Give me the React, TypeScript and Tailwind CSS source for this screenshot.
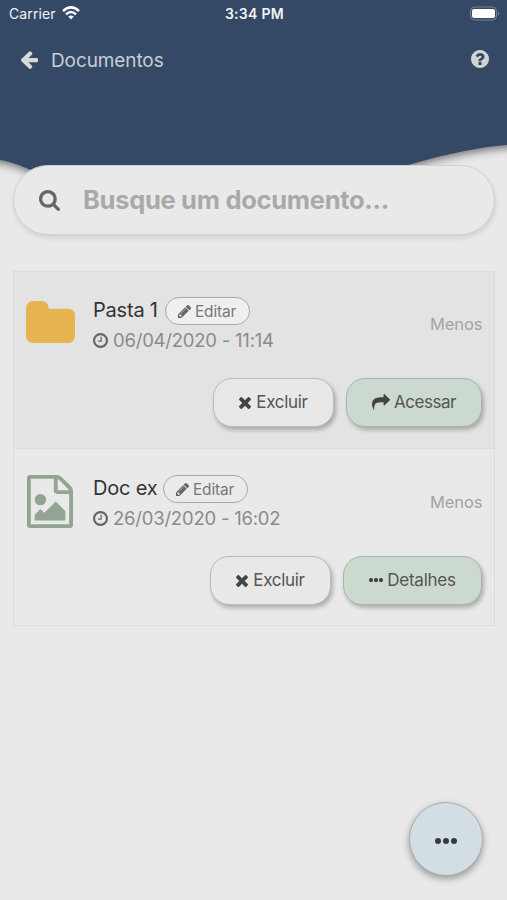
import type { ReactNode } from "react";

type GlyphProps = { box: string; d: string; className: string };

function Glyph({ box, d, className }: GlyphProps) {
  return (
    <svg viewBox={box} preserveAspectRatio="none" fill="currentColor" className={`block shrink-0 ${className}`} aria-hidden="true">
      <path d={d} />
    </svg>
  );
}

const glyphs = {
  arrow: {
    box: "192 154 1472 1586",
    d: "M1664 896v128q0 53-32.5 90.5T1547 1152H843l293 294q38 36 38 90t-38 90l-75 76q-37 37-90 37-52 0-91-37l-651-652q-37-37-37-90 0-52 37-91l651-650q38-38 91-38 52 0 90 38l75 74q38 38 38 91t-38 91L843 768h704q52 0 84.500 37.500T1664 896z",
  },
  question: {
    box: "128 128 1536 1536",
    d: "M1024 1376v-192q0-14-9-23t-23-9H800q-14 0-23 9t-9 23v192q0 14 9 23t23 9h192q14 0 23-9t9-23zm256-672q0-88-55.500-163t-138.500-116-170-41q-243 0-371 213-15 24 8 42l132 100q7 6 19 6 16 0 25-12 53-68 86-92 34-24 86-24 48 0 85.500 26t37.500 59q0 38-20 61t-68 45q-63 28-115.500 86.500T768 1020v36q0 14 9 23t23 9h192q14 0 23-9t9-23q0-19 21.500-49.500T1100 957q32-18 49-28.500t46-35 44.500-48 28-60.500 12.500-81zm384 192q0 209-103 385.500T1281.500 1561 896 1664t-385.500-103T231 1281.500 128 896t103-385.500T510.500 231 896 128t385.500 103T1561 510.500 1664 896z",
  },
  search: {
    box: "64 128 1664 1664",
    d: "M1216 832q0-185-131.500-316.500T768 384 451.500 515.500 320 832t131.500 316.500T768 1280t316.500-131.500T1216 832zm512 832q0 52-38 90t-90 38q-54 0-90-38l-343-342q-179 124-399 124-143 0-273.500-55.500t-225-150-150-225T64 832t55.500-273.500 150-225 225-150T768 128t273.500 55.500 225 150 150 225T1472 832q0 220-124 399l343 343q37 37 37 90z",
  },
  folder: {
    box: "64 128 1664 1408",
    d: "M1728 608v704q0 92-66 158t-158 66H288q-92 0-158-66t-66-158V352q0-92 66-158t158-66h320q92 0 158 66t66 158v32h672q92 0 158 66t66 158z",
  },
  image: {
    box: "128 0 1536 1792",
    d: "M1596 380q28 28 48 76t20 88v1152q0 40-28 68t-68 28H224q-40 0-68-28t-28-68V96q0-40 28-68t68-28h896q40 0 88 20t76 48zm-444-244v376h376q-10-29-22-41l-313-313q-12-12-41-22zm384 1528V640h-416q-40 0-68-28t-28-68V128H256v1536h1280zm-128-448v320H384v-192l192-192 128 128 384-384zm-832-192q-80 0-136-56t-56-136 56-136 136-56 136 56 56 136-56 136-136 56z",
  },
  clock: {
    box: "128 128 1536 1536",
    d: "M1024 544v448q0 14-9 23t-23 9H672q-14 0-23-9t-9-23v-64q0-14 9-23t23-9h224V544q0-14 9-23t23-9h64q14 0 23 9t9 23zm416 352q0-148-73-273t-198-198-273-73-273 73-198 198-73 273 73 273 198 198 273 73 273-73 198-198 73-273zm224 0q0 209-103 385.500T1281.500 1561 896 1664t-385.500-103T231 1281.500 128 896t103-385.500T510.500 231 896 128t385.500 103T1561 510.500 1664 896z",
  },
  pencil: {
    box: "128 149 1515 1515",
    d: "M491 1536l91-91-235-235-91 91v107h128v128h107zm523-928q0-22-22-22-10 0-17 7l-542 542q-7 7-7 17 0 22 22 22 10 0 17-7l542-542q7-7 7-17zm-54-192l416 416-832 832H128v-416zm683 96q0 53-37 90l-166 166-416-416 166-165q36-38 90-38 53 0 91 38l235 234q37 39 37 91z",
  },
  times: {
    box: "302 366 1188 1188",
    d: "M1490 1322q0 40-28 68l-136 136q-28 28-68 28t-68-28l-294-294-294 294q-28 28-68 28t-68-28l-136-136q-28-28-28-68t28-68l294-294-294-294q-28-28-28-68t28-68l136-136q28-28 68-28t68 28l294 294 294-294q28-28 68-28t68 28l136 136q28 28 28 68t-28 68l-294 294 294 294q28 28 28 68z",
  },
  share: {
    box: "0 64 1792 1596",
    d: "M1792 640q0 26-19 45l-512 512q-19 19-45 19t-45-19-19-45V896H928q-98 0-175.500 6t-154 21.500-133 42.500-105.500 69.500-80 101-48.500 138.500T214 1452q0 55 5 123 0 6 2.500 23.500T224 1625q0 15-8.500 25t-23.500 10q-16 0-28-17-7-9-13-22t-13.500-30-10.500-24Q0 1282 0 1132q0-199 53-333Q215 384 928 384h224V128q0-26 19-45t45-19 45 19l512 512q19 19 19 45z",
  },
};

function StatusBar() {
  return (
    <div className="grid h-7 grid-cols-3 items-center pl-[9px] pr-[7px] text-[14px] leading-none text-[#f1f3f5]">
      <div className="flex items-center gap-[6px]">
        <span className="w-[47px] whitespace-nowrap tracking-[0.1px]">Carrier</span>
        <svg viewBox="0 0 18 14" className="-mt-0.5 h-[14px] w-[18px]" fill="none" stroke="white" strokeWidth="2.500">
          <path d="M1 5.100Q9-2.300 17 5.100" />
          <path d="M4 8.300Q9 3.700 14 8.300" />
          <path d="M9 13.500 6.200 10.600Q9 8.300 11.800 10.600Z" fill="white" stroke="none" />
        </svg>
      </div>
      <span className="whitespace-nowrap text-center text-[14px] font-semibold tracking-[0.3px]">3:34 PM</span>
      <svg viewBox="0 0 31 15" className="-mt-0.5 h-[15px] w-[31px] justify-self-end">
        <rect x="1.500" y="1" width="26" height="13" rx="4" fill="none" stroke="#73829a" />
        <rect x="3" y="3" width="23" height="9" rx="2" fill="white" />
        <path d="M29 5.500q2 2 0 4z" fill="#8390a4" />
      </svg>
    </div>
  );
}

function ActionButton({ children, className }: { children: ReactNode; className: string }) {
  return (
    <button
      className={`flex h-[49px] items-center justify-center whitespace-nowrap rounded-[19px] border text-[17px] text-[#555] shadow-[2px_3px_4px_rgba(0,0,0,0.25)] ${className}`}
    >
      {children}
    </button>
  );
}

type RowProps = {
  icon: ReactNode;
  name: string;
  nameClass: string;
  date: string;
  className: string;
  pillClass: string;
  children: ReactNode;
};

function DocumentRow({ icon, name, nameClass, date, className, pillClass, children }: RowProps) {
  return (
    <li className={`flex flex-col pr-3 ${className}`}>
      <div className="flex h-[106px] pt-6">
        <div className="flex w-[79px] shrink-0 justify-start">{icon}</div>
        <div className="flex-1">
          <div className="flex h-[30px] items-center">
            <span className={`whitespace-nowrap pb-[2px] text-[20px] leading-none tracking-[-0.2px] text-[#333] ${nameClass}`}>{name}</span>
            <button className={`flex h-7 w-[85px] items-center justify-center gap-1 rounded-full border border-[#aaa] pt-px text-[15.500px] text-[#777] ${pillClass}`}>
              <Glyph {...glyphs.pencil} className="size-[13px] text-[#666]" />
              <span className="w-[42px] text-left tracking-[-0.2px]">Editar</span>
            </button>
          </div>
          <div className="flex h-[28px] items-center gap-[5px] text-[#8b8b8b]">
            <Glyph {...glyphs.clock} className="size-[15px] text-[#666]" />
            <span className="whitespace-nowrap text-[18.500px] leading-none tracking-[-0.220px]">{date}</span>
          </div>
        </div>
        <span className="-mr-0.5 w-[54px] pt-[18px] text-[16.500px] leading-[20px] tracking-[-0.1px] text-[#a3a3a3]">Menos</span>
      </div>
      <div className="flex justify-end gap-3">{children}</div>
    </li>
  );
}

function DeleteButton() {
  return (
    <ActionButton className="w-[121px] gap-[5px] border-[#bbb] bg-[#e8e8e8]">
      <Glyph {...glyphs.times} className="size-[12px] text-[#444]" />
      <span className="tracking-[-0.3px]">Excluir</span>
    </ActionButton>
  );
}

export default function App() {
  return (
    <main className="relative h-[900px] w-full overflow-hidden bg-[#e9e9e9] font-['Inter','Liberation_Sans',sans-serif]">
      <header className="relative z-10 h-[135px] bg-[#344966]">
        <StatusBar />
        <div className="flex h-[64px] items-center pl-[21px] pr-[18px] text-[#c9cdd2]">
          <Glyph {...glyphs.arrow} className="h-[18px] w-[17px] text-[#d8d9da]" />
          <h1 className="ml-[13px] flex-1 text-[19px] font-normal leading-none tracking-[-0.1px]">Documentos</h1>
          <Glyph {...glyphs.question} className="mb-[2px] size-[18px] text-[#d3d3d3]" />
        </div>
      </header>
      <svg viewBox="0 0 507 55" className="block h-[55px] w-full overflow-visible drop-shadow-[0_3px_4px_rgba(0,0,0,0.5)]">
        <path d="M-20-10H527V8Q467 12 408 30Q330 55 230 52Q100 54 50 42C26 34 18 28 0 25L-20 22Z" fill="#344966" />
      </svg>
      <label className="relative ml-[13px] mr-3 -mt-[25px] flex h-[70px] items-center rounded-full border border-[#d1d1d1] bg-[#e9e9e9] pl-[25px] shadow-[1px_3px_5px_rgba(0,0,0,0.1)]">
        <Glyph {...glyphs.search} className="size-[21px] text-[#666]" />
        <input
          placeholder="Busque um documento..."
          className="ml-[23px] w-[340px] bg-transparent text-[25.500px] font-bold tracking-[-0.3px] outline-none placeholder:text-[#a9a9a9] placeholder:opacity-100"
        />
      </label>
      <ul className="ml-[13px] mr-3 mt-9 border border-[#dcdcdc]">
        <DocumentRow
          icon={<Glyph {...glyphs.folder} className="ml-3 mt-[5px] h-[42px] w-[49px] text-[#e7b452]" />}
          name="Pasta 1"
          nameClass="w-[66px]"
          date="06/04/2020 - 11:14"
          className="h-[177px] border-b border-[#dcdcdc] bg-[#e3e3e3]"
          pillClass="ml-[6px] bg-[#efefef]"
        >
          <DeleteButton />
          <ActionButton className="w-[136px] gap-[4px] border-[#a9b5ac] bg-[#cbd9cf]">
            <Glyph {...glyphs.share} className="mb-[2px] h-[16px] w-[18px] text-[#444]" />
            <span className="tracking-[-0.450px]">Acessar</span>
          </ActionButton>
        </DocumentRow>
        <DocumentRow
          icon={<Glyph {...glyphs.image} className="ml-[13px] mt-px h-[53px] w-[46px] text-[#92a592]" />}
          name="Doc ex"
          nameClass="w-[65px]"
          date="26/03/2020 - 16:02"
          className="h-[176px] pt-px"
          pillClass="ml-[5px] bg-[#ebebeb]"
        >
          <DeleteButton />
          <ActionButton className="w-[139px] gap-[4px] border-[#a9b5ac] bg-[#cbd9cf]">
            <span className="flex gap-px pb-[2px]">
              <i className="size-1 rounded-[1.500px] bg-[#444]" />
              <i className="size-1 rounded-[1.500px] bg-[#444]" />
              <i className="size-1 rounded-[1.500px] bg-[#444]" />
            </span>
            <span className="tracking-[-0.250px]">Detalhes</span>
          </ActionButton>
        </DocumentRow>
      </ul>
      <button className="absolute bottom-6 right-6 flex size-[74px] items-center justify-center gap-[2px] rounded-full border border-[#a9aeb1] bg-[#d2dee3] pt-[3px] shadow-[0_3px_7px_rgba(0,0,0,0.35)]">
        <i className="size-[6px] rounded-full bg-[#36393f]" />
        <i className="size-[6px] rounded-full bg-[#36393f]" />
        <i className="size-[6px] rounded-full bg-[#36393f]" />
      </button>
    </main>
  );
}
